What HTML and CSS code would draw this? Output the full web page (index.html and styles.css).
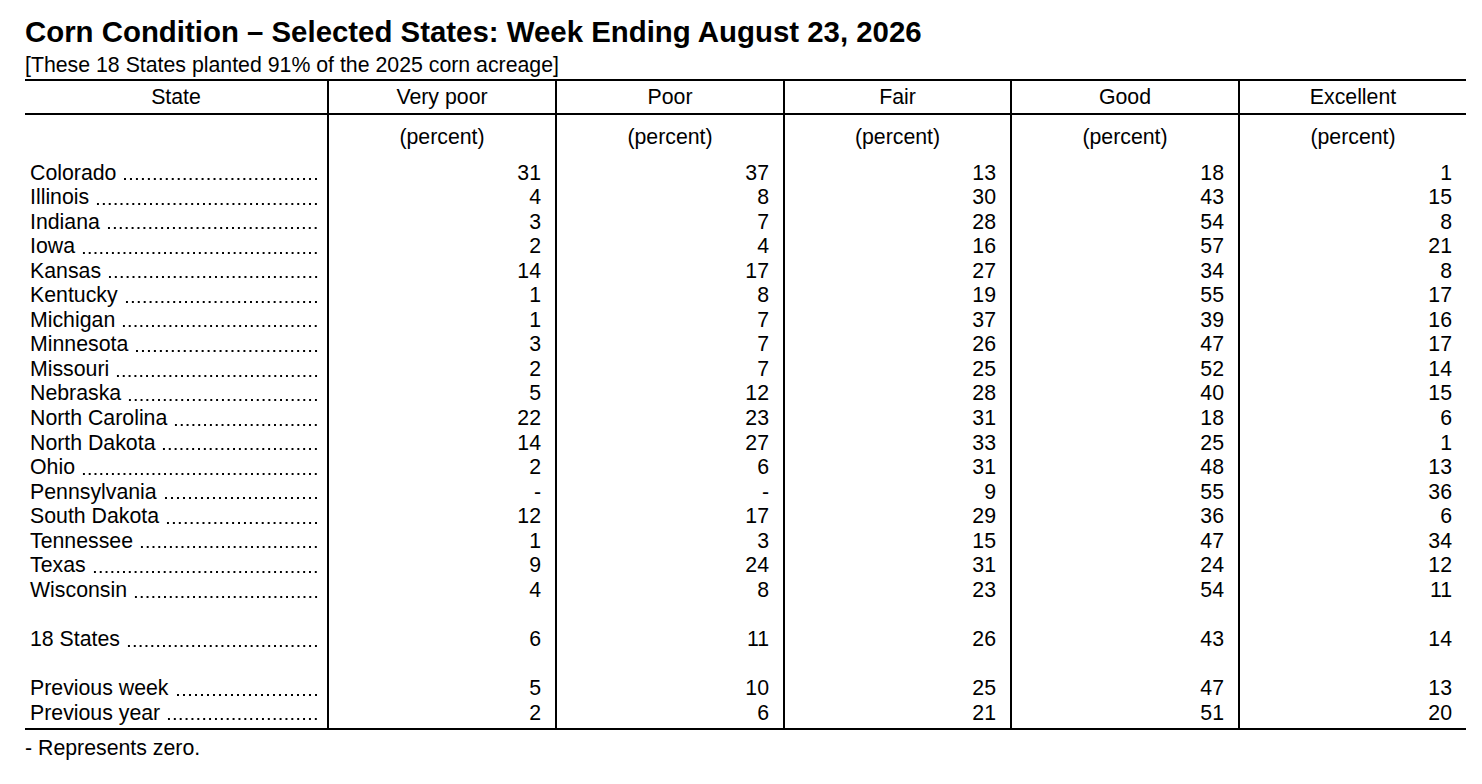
FILE: index.html
```html
<!DOCTYPE html>
<html lang="en">
<head>
<meta charset="utf-8">
<title>Corn Condition – Selected States</title>
<link rel="stylesheet" href="styles.css">
</head>
<body>
<div class="page">
  <h1 class="title">Corn Condition – Selected States: Week Ending August 23, 2026</h1>
  <p class="subtitle">[These 18 States planted 91% of the 2025 corn acreage]</p>
  <table class="cond">
    <colgroup>
      <col class="c-state"><col class="c-num"><col class="c-num"><col class="c-num4"><col class="c-num"><col class="c-num">
    </colgroup>
    <thead>
      <tr class="hdr"><th>State</th><th>Very poor</th><th>Poor</th><th>Fair</th><th>Good</th><th>Excellent</th></tr>
    </thead>
    <tbody>
      <tr class="units"><td></td><td>(percent)</td><td>(percent)</td><td>(percent)</td><td>(percent)</td><td>(percent)</td></tr>
      <tr class="row"><td class="st"><div class="stw"><span class="nm">Colorado</span><span class="ld"></span></div></td><td>31</td><td>37</td><td>13</td><td>18</td><td>1</td></tr>
      <tr class="row"><td class="st"><div class="stw"><span class="nm">Illinois</span><span class="ld"></span></div></td><td>4</td><td>8</td><td>30</td><td>43</td><td>15</td></tr>
      <tr class="row"><td class="st"><div class="stw"><span class="nm">Indiana</span><span class="ld"></span></div></td><td>3</td><td>7</td><td>28</td><td>54</td><td>8</td></tr>
      <tr class="row"><td class="st"><div class="stw"><span class="nm">Iowa</span><span class="ld"></span></div></td><td>2</td><td>4</td><td>16</td><td>57</td><td>21</td></tr>
      <tr class="row"><td class="st"><div class="stw"><span class="nm">Kansas</span><span class="ld"></span></div></td><td>14</td><td>17</td><td>27</td><td>34</td><td>8</td></tr>
      <tr class="row"><td class="st"><div class="stw"><span class="nm">Kentucky</span><span class="ld"></span></div></td><td>1</td><td>8</td><td>19</td><td>55</td><td>17</td></tr>
      <tr class="row"><td class="st"><div class="stw"><span class="nm">Michigan</span><span class="ld"></span></div></td><td>1</td><td>7</td><td>37</td><td>39</td><td>16</td></tr>
      <tr class="row"><td class="st"><div class="stw"><span class="nm">Minnesota</span><span class="ld"></span></div></td><td>3</td><td>7</td><td>26</td><td>47</td><td>17</td></tr>
      <tr class="row"><td class="st"><div class="stw"><span class="nm">Missouri</span><span class="ld"></span></div></td><td>2</td><td>7</td><td>25</td><td>52</td><td>14</td></tr>
      <tr class="row"><td class="st"><div class="stw"><span class="nm">Nebraska</span><span class="ld"></span></div></td><td>5</td><td>12</td><td>28</td><td>40</td><td>15</td></tr>
      <tr class="row"><td class="st"><div class="stw"><span class="nm">North Carolina</span><span class="ld"></span></div></td><td>22</td><td>23</td><td>31</td><td>18</td><td>6</td></tr>
      <tr class="row"><td class="st"><div class="stw"><span class="nm">North Dakota</span><span class="ld"></span></div></td><td>14</td><td>27</td><td>33</td><td>25</td><td>1</td></tr>
      <tr class="row"><td class="st"><div class="stw"><span class="nm">Ohio</span><span class="ld"></span></div></td><td>2</td><td>6</td><td>31</td><td>48</td><td>13</td></tr>
      <tr class="row"><td class="st"><div class="stw"><span class="nm">Pennsylvania</span><span class="ld"></span></div></td><td>-</td><td>-</td><td>9</td><td>55</td><td>36</td></tr>
      <tr class="row"><td class="st"><div class="stw"><span class="nm">South Dakota</span><span class="ld"></span></div></td><td>12</td><td>17</td><td>29</td><td>36</td><td>6</td></tr>
      <tr class="row"><td class="st"><div class="stw"><span class="nm">Tennessee</span><span class="ld"></span></div></td><td>1</td><td>3</td><td>15</td><td>47</td><td>34</td></tr>
      <tr class="row"><td class="st"><div class="stw"><span class="nm">Texas</span><span class="ld"></span></div></td><td>9</td><td>24</td><td>31</td><td>24</td><td>12</td></tr>
      <tr class="row"><td class="st"><div class="stw"><span class="nm">Wisconsin</span><span class="ld"></span></div></td><td>4</td><td>8</td><td>23</td><td>54</td><td>11</td></tr>
      <tr class="gap"><td></td><td></td><td></td><td></td><td></td><td></td></tr>
      <tr class="row"><td class="st"><div class="stw"><span class="nm">18 States</span><span class="ld"></span></div></td><td>6</td><td>11</td><td>26</td><td>43</td><td>14</td></tr>
      <tr class="gap"><td></td><td></td><td></td><td></td><td></td><td></td></tr>
      <tr class="row"><td class="st"><div class="stw"><span class="nm">Previous week</span><span class="ld"></span></div></td><td>5</td><td>10</td><td>25</td><td>47</td><td>13</td></tr>
      <tr class="row last"><td class="st"><div class="stw"><span class="nm">Previous year</span><span class="ld"></span></div></td><td>2</td><td>6</td><td>21</td><td>51</td><td>20</td></tr>
    </tbody>
  </table>
  <p class="note">- Represents zero.</p>
</div>
</body>
</html>
```

FILE: styles.css
```css
html, body {
  margin: 0;
  padding: 0;
  background: #ffffff;
}

body {
  font-family: "Liberation Sans", Arial, sans-serif;
  color: #000000;
}

.page {
  padding: 15px 0 0 25px;
  width: 1441px;
}

.title {
  margin: 0;
  font-size: 29.4px;
  font-weight: 700;
  line-height: 34px;
  white-space: nowrap;
}

.subtitle {
  margin: 4px 0 0 0;
  font-size: 21.3px;
  line-height: 24px;
  white-space: nowrap;
}

.cond {
  margin-top: 2px;
  width: 1441px;
  table-layout: fixed;
  border-collapse: separate;
  border-spacing: 0;
  font-size: 21.3px;
}

.c-state { width: 302px; }
.c-num { width: 228px; }
.c-num4 { width: 227px; }

.cond th,
.cond td {
  padding: 0;
  box-sizing: border-box;
}

.cond th + th,
.cond td + td {
  border-left: 2px solid #000;
}

.hdr th {
  font-weight: 400;
  text-align: center;
  height: 36px;
  line-height: 32px;
  border-top: 2px solid #000;
  border-bottom: 2px solid #000;
}

.units td {
  text-align: center;
  line-height: 24.55px;
  padding: 10px 0 11px 0;
}

.row td {
  line-height: 24.55px;
  text-align: right;
  padding-right: 14px;
  white-space: nowrap;
}

.row td.st {
  text-align: left;
  padding: 0 8px 0 5px;
}

.stw {
  display: flex;
}

.nm {
  flex: none;
}

.ld {
  flex: 1 1 auto;
  min-width: 0;
  margin-left: 6px;
  background-image: linear-gradient(to right, transparent 1.9px, #000 1.9px, #000 3.8px, transparent 3.8px);
  background-size: 5.8px 2px;
  background-repeat: space no-repeat;
  background-position: right bottom 4.9px;
}

.gap td {
  height: 24.55px;
}

.last td {
  padding-bottom: 2.5px;
  border-bottom: 2px solid #000;
}

.row.last td.st {
  padding-bottom: 2.5px;
}

.note {
  margin: 0;
  padding-top: 6px;
  font-size: 21.3px;
  line-height: 24px;
}
```
